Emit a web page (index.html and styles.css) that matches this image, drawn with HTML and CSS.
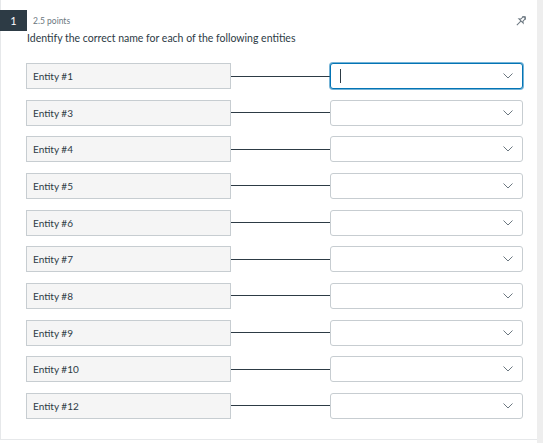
FILE: index.html
```html
<!DOCTYPE html>
<html>
<head>
<meta charset="utf-8">
<link rel="stylesheet" href="styles.css">
</head>
<body>
<div class="page">
  <div class="question">
    <div class="header">
      <div class="badge">1</div>
      <div class="points">2.5 points</div>
      <svg class="pin" width="12" height="12" viewBox="0 0 12 12">
        <g transform="translate(6.8,5.2) rotate(45)" fill="none" stroke="#6b7780" stroke-width="1">
          <path d="M-2.5,-6.2 H2.5 V-5 H-2.5 Z"/>
          <path d="M-1.5,-5 V-1.6 L-3,-0.4 H3 L1.5,-1.6 V-5"/>
          <path d="M0,-0.4 V5.6"/>
        </g>
      </svg>
    </div>
    <div class="prompt">Identify the correct name for each of the following entities</div>
    <div class="rows">
      <div class="row"><div class="entity">Entity #1</div><div class="line"></div><div class="select focused"><span class="caret"></span><svg class="chev" width="10" height="6" viewBox="0 0 10 6"><polyline points="0.5,0.5 5,5 9.5,0.5"/></svg></div></div>
      <div class="row"><div class="entity">Entity #3</div><div class="line"></div><div class="select"><svg class="chev" width="10" height="6" viewBox="0 0 10 6"><polyline points="0.5,0.5 5,5 9.5,0.5"/></svg></div></div>
      <div class="row"><div class="entity">Entity #4</div><div class="line"></div><div class="select"><svg class="chev" width="10" height="6" viewBox="0 0 10 6"><polyline points="0.5,0.5 5,5 9.5,0.5"/></svg></div></div>
      <div class="row"><div class="entity">Entity #5</div><div class="line"></div><div class="select"><svg class="chev" width="10" height="6" viewBox="0 0 10 6"><polyline points="0.5,0.5 5,5 9.5,0.5"/></svg></div></div>
      <div class="row"><div class="entity">Entity #6</div><div class="line"></div><div class="select"><svg class="chev" width="10" height="6" viewBox="0 0 10 6"><polyline points="0.5,0.5 5,5 9.5,0.5"/></svg></div></div>
      <div class="row"><div class="entity">Entity #7</div><div class="line"></div><div class="select"><svg class="chev" width="10" height="6" viewBox="0 0 10 6"><polyline points="0.5,0.5 5,5 9.5,0.5"/></svg></div></div>
      <div class="row"><div class="entity">Entity #8</div><div class="line"></div><div class="select"><svg class="chev" width="10" height="6" viewBox="0 0 10 6"><polyline points="0.5,0.5 5,5 9.5,0.5"/></svg></div></div>
      <div class="row"><div class="entity">Entity #9</div><div class="line"></div><div class="select"><svg class="chev" width="10" height="6" viewBox="0 0 10 6"><polyline points="0.5,0.5 5,5 9.5,0.5"/></svg></div></div>
      <div class="row"><div class="entity">Entity #10</div><div class="line"></div><div class="select"><svg class="chev" width="10" height="6" viewBox="0 0 10 6"><polyline points="0.5,0.5 5,5 9.5,0.5"/></svg></div></div>
      <div class="row"><div class="entity">Entity #12</div><div class="line"></div><div class="select"><svg class="chev" width="10" height="6" viewBox="0 0 10 6"><polyline points="0.5,0.5 5,5 9.5,0.5"/></svg></div></div>
    </div>
  </div>
  <div class="strip"></div>
</div>
</body>
</html>
```

FILE: styles.css
```css
html, body {
  margin: 0;
  padding: 0;
  background: #ffffff;
}
body {
  font-family: Lato, "Liberation Sans", sans-serif;
  color: #2d3b45;
}
.page {
  display: grid;
  grid-template-columns: 537px 6px;
  height: 443px;
}
.question {
  border-left: 1px solid #e6e8ea;
  border-bottom: 1px solid #e6e8ea;
  box-sizing: border-box;
  height: 440px;
}
.strip {
  background: #eeeeee;
}
.header {
  display: flex;
  align-items: center;
  padding-top: 10px;
  margin-left: -1px;
  padding-right: 11px;
}
.badge {
  width: 27px;
  height: 21px;
  background: #2d3b45;
  color: #ffffff;
  font-size: 11px;
  line-height: 21px;
  text-align: center;
}
.points {
  margin-left: 6px;
  font-size: 8.5px;
  color: #6b7780;
  flex: 1;
}
.pin {
  display: block;
  margin-top: 2px;
}
.prompt {
  padding-left: 26px;
  font-size: 10.5px;
  line-height: 12px;
  margin-top: 1px;
}
.rows {
  display: flex;
  flex-direction: column;
  gap: 10.67px;
  margin-top: 19px;
  padding-left: 25px;
}
.row {
  display: flex;
  align-items: center;
  height: 26px;
}
.entity {
  width: 205px;
  height: 26px;
  box-sizing: border-box;
  background: #f5f5f5;
  border: 1px solid #c7cdd1;
  font-size: 10px;
  line-height: 24px;
  padding-left: 6px;
}
.line {
  width: 99px;
  height: 1px;
  background: #2d3b45;
}
.select {
  width: 193px;
  height: 26px;
  box-sizing: border-box;
  border: 1px solid #c7cdd1;
  border-radius: 3px;
  background: #ffffff;
  display: flex;
  align-items: center;
  padding-left: 9px;
  padding-right: 9px;
}
.select.focused {
  border-color: #0374b5;
  box-shadow: 0 0 0 1px rgba(3, 116, 181, 0.55);
}
.caret {
  width: 1px;
  height: 14px;
  background: #2d3b45;
}
.chev {
  display: block;
  margin-left: auto;
}
.chev polyline {
  fill: none;
  stroke: #6b7780;
  stroke-width: 1;
}
```
